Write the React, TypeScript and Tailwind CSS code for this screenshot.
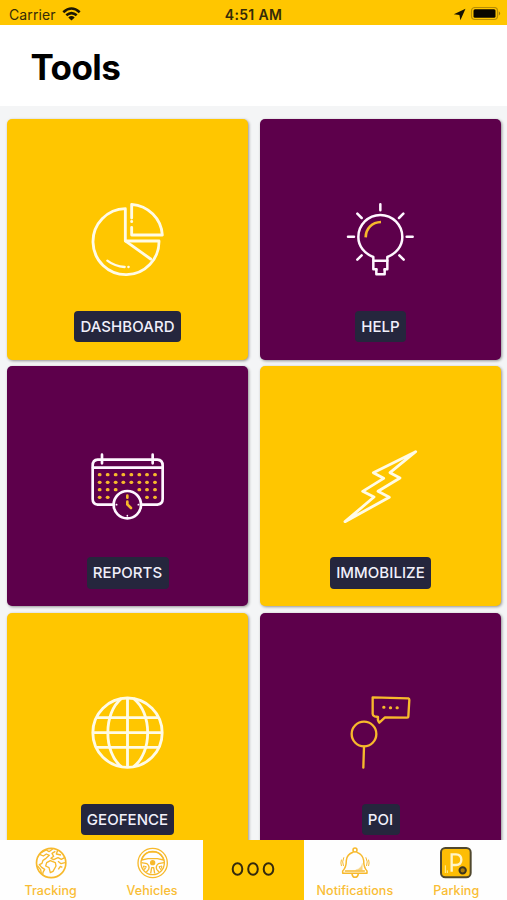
import type { ReactNode } from "react";

const GOLD = "#f7b92c";

function PieIcon() {
  return (
    <svg className="h-20 w-19" viewBox="90 30 228 240" fill="none" stroke="#fffbe6" strokeWidth="8.500" strokeLinejoin="round" strokeLinecap="round">
      <path d="M196 56A99 99 0 1 0 297 153H196Z" />
      <path d="M198 154L272 207" />
      <path d="M215 84V43C265 47 304 86 307 135H215V112" />
      <path d="M215 94V95" />
      <path d="M142 212Q164 229 194 231M205 231H206" strokeWidth="7" />
    </svg>
  );
}

function BulbIcon() {
  return (
    <svg className="h-20 w-19" viewBox="99 30 228 240" fill="none" stroke="#fff7ff" strokeWidth="7.500" strokeLinejoin="round" strokeLinecap="round">
      <path d="M190 201C164 191 145 169 145 141A66 66 0 0 1 277 141C277 169 258 191 232 201V238H224V253H199V238H190Z" />
      <path d="M191 212H232M199 238V239M224 238V239" />
      <path d="M211 43V61M142 71L155 84M280 71L267 84M114 140H132M290 140H308M142 209L155 196M281 209L268 196" />
      <path d="M167 142C168 115 186 97 213 96" stroke={GOLD} strokeWidth="8" strokeLinecap="butt" />
    </svg>
  );
}

const dotRows = [
  { y: 118, xs: [119, 143, 167, 190, 214, 238, 261, 285] },
  { y: 141, xs: [119, 143, 167, 190, 214, 238, 261, 285] },
  { y: 163, xs: [119, 143, 167, 238, 261, 285] },
  { y: 186, xs: [119, 143, 261, 285] },
];

function CalendarIcon() {
  return (
    <svg className="h-20 w-19" viewBox="90 35 228 240" fill="none" stroke="#fff7ff" strokeWidth="8" strokeLinecap="round">
      <path d="M160 208H113Q98 206 98 191V91Q98 74 113 73H292Q308 74 308 91V191Q308 206 292 208H245" />
      <path d="M99 97H307M126 58V84M278 58V84" />
      <circle cx="202" cy="208" r="41" />
      {dotRows.map((row) =>
        row.xs.map((x) => (
          <path key={`${x}-${row.y}`} d={`M${x - 1} ${row.y}H${x + 1}`} stroke={GOLD} strokeWidth="9.500" />
        )),
      )}
      <path d="M202 181V187M202 199V207L213 218" stroke={GOLD} strokeWidth="8" />
      <path d="M169 208H170M235 208H236M202 241V242" strokeWidth="5" />
    </svg>
  );
}

function BoltIcon() {
  return (
    <svg className="h-20 w-19" viewBox="99 35 228 240" fill="none" stroke="#fffbe6" strokeWidth="8.500" strokeLinejoin="round">
      <path d="M317 49L190 112L221 129L158 168L192 185L105 259L238 186L204 168L270 128L240 112Z" />
    </svg>
  );
}

function GlobeIcon() {
  return (
    <svg className="h-20 w-19" viewBox="90 25 228 240" fill="none" stroke="#fffbe6" strokeWidth="8.500">
      <circle cx="202.500" cy="144" r="104" />
      <path d="M202.500 40V248M99 144H306M110 99H295M110 188H295" />
      <path d="M184 42C130 85 130 203 184 246M221 42C277 85 277 203 221 246" />
    </svg>
  );
}

function PoiIcon() {
  return (
    <svg className="h-20 w-19" viewBox="99 25 228 240" fill="none" stroke={GOLD} strokeWidth="7" strokeLinejoin="round" strokeLinecap="round">
      <circle cx="162" cy="148" r="37" />
      <path d="M162 186L160 249" />
      <path d="M188 38L295 41Q298 42 298 46L295 95Q295 99 291 99L225 98L208 114Q202 108 204 97L194 95Q188 93 188 88Z" />
      <path d="M221 68H222M241 69H242M261 69H262" strokeWidth="9" />
    </svg>
  );
}

function EarthIcon() {
  return (
    <svg className="size-9" viewBox="99 46 108 108" fill="none" stroke={GOLD} strokeWidth="4" strokeLinejoin="round">
      <circle cx="153.500" cy="100" r="44" strokeWidth="5" />
      <path d="M119 74L130 79L139 73L148 77L138 86L129 92L126 101L118 105L125 113L134 119L129 128L128 136M122 70L139 61L147 66L158 58M112 108L122 120L124 132" />
      <path d="M166 65L156 71L161 80L153 86L161 90L174 84L184 89L195 83M173 62L169 73L183 76M140 99L151 93L166 99L168 109L159 125L151 129L147 114L137 109ZM174 95L183 102L195 99M175 119L181 110L187 113" />
    </svg>
  );
}

function WheelIcon() {
  return (
    <svg className="size-9" viewBox="403 46 108 108" fill="none" stroke={GOLD} strokeWidth="4" strokeLinejoin="round">
      <circle cx="459" cy="100" r="44" />
      <circle cx="459" cy="100" r="35" />
      <path d="M426 91Q432 72 449 67H469Q486 72 492 91L473 87H445ZM425 99L442 102Q451 109 447 119L440 127M493 99L476 102Q467 109 471 119L478 127M453 131L456 114H462L465 131" />
      <circle cx="459" cy="99" r="6" fill={GOLD} />
      <path d="M431 109L440 111L435 120ZM487 109L478 111L483 120Z" strokeWidth="3" />
    </svg>
  );
}

function DotsIcon() {
  return (
    <svg className="h-4 w-12" viewBox="0 0 48 16" fill="none" stroke="#342a0d" strokeWidth="2">
      <ellipse cx="8.500" cy="7" rx="4.800" ry="5.800" />
      <ellipse cx="24" cy="7" rx="4.800" ry="5.800" />
      <ellipse cx="39.500" cy="7" rx="4.800" ry="5.800" />
    </svg>
  );
}

function BellIcon() {
  return (
    <svg className="size-9" viewBox="251 46 108 108" fill="none" stroke={GOLD} strokeWidth="4.500" strokeLinejoin="round" strokeLinecap="round">
      <path d="M299 68Q281 74 279 92Q279 114 268 124V131H341V124Q331 114 331 92Q328 74 311 68" />
      <circle cx="305" cy="61" r="6" />
      <path d="M296 133Q298 143 305 143Q313 143 315 133M276 124H333" />
      <path d="M271 84Q265 97 270 108M264 91Q261 100 264 108M338 84Q345 97 340 108M346 91Q349 100 346 108" strokeWidth="3" />
      <path d="M327 102V121H307Q323 117 327 102Z" fill={GOLD} strokeWidth="1" opacity=".6" />
    </svg>
  );
}

function ParkingIcon() {
  return (
    <svg className="size-9" viewBox="555 46 108 108" fill="none">
      <rect x="564" y="55" width="89" height="88" rx="13" fill="#fdbd05" stroke="#50482f" strokeWidth="6" />
      <path d="M596 126V74H609Q625 75 625 90Q625 105 609 106H597" stroke="#fff5c9" strokeWidth="7" />
      <path d="M577 107V130M583 122V130" stroke="#fff0a0" strokeWidth="3" />
      <circle cx="629" cy="122" r="9.500" fill="#a87b0b" stroke="#3b351f" strokeWidth="6" />
    </svg>
  );
}

function StatusBar() {
  return (
    <div className="grid h-[25px] shrink-0 grid-cols-3 items-center bg-[#ffc600] pt-[3px] text-[#352b08]">
      <div className="flex items-center gap-[6px] pl-[9px] text-[14px] tracking-[0.1px]">
        <span>Carrier</span>
        <svg className="h-[14px] w-[19px]" viewBox="0 0 19 14" fill="none" stroke="#1c1704" strokeWidth="2.6">
          <path d="M1.300 5.200Q9.500 -2.200 17.700 5.200M4.300 8.300Q9.500 3.800 14.700 8.300" />
          <path d="M9.500 13.500L6.300 10.400Q9.500 7.800 12.700 10.400Z" fill="#1c1704" stroke="none" />
        </svg>
      </div>
      <div className="text-center text-[14px] font-semibold tracking-[0.35px]">4:51 AM</div>
      <div className="flex items-center justify-end gap-[4px] pr-[6px]">
        <svg className="size-[13px]" viewBox="0 0 13 13" fill="#171303">
          <path d="M12.500 .7L7.400 12.200L6.400 6.900L.8 6.200Z" />
        </svg>
        <svg className="h-[14px] w-[31px]" viewBox="0 0 31 14">
          <rect x="1.500" y="0.500" width="26" height="12" rx="3.500" fill="none" stroke="#b68d05" strokeWidth="1.2" />
          <rect x="3.500" y="2.300" width="22" height="8.500" rx="1.500" fill="#090600" />
          <path d="M28.800 4.300Q31.500 6.500 28.800 8.700Z" fill="#9a7808" />
        </svg>
      </div>
    </div>
  );
}

type ToolProps = { label: string; width: string; color: string; icon: ReactNode };

function ToolCard({ label, width, color, icon }: ToolProps) {
  return (
    <button className={`flex h-[240.400px] flex-col items-center rounded-[5px] pt-[80.700px] shadow-[1px_1px_3px_rgba(0,0,0,0.4)] ${color}`}>
      {icon}
      <span className={`mt-[30.800px] flex h-[31.300px] items-center justify-center rounded-[4px] bg-[#25263d] pt-px text-[15px] font-medium tracking-[0.05px] text-[#f1f0fb] ${width}`}>
        {label}
      </span>
    </button>
  );
}

const tools: ToolProps[] = [
  { label: "DASHBOARD", width: "w-[107px]", color: "bg-[#ffc600]", icon: <PieIcon /> },
  { label: "HELP", width: "w-[51px]", color: "bg-[#5d004b]", icon: <BulbIcon /> },
  { label: "REPORTS", width: "w-[82px]", color: "bg-[#5d004b]", icon: <CalendarIcon /> },
  { label: "IMMOBILIZE", width: "w-[101px]", color: "bg-[#ffc600]", icon: <BoltIcon /> },
  { label: "GEOFENCE", width: "w-[93px]", color: "bg-[#ffc600]", icon: <GlobeIcon /> },
  { label: "POI", width: "w-[38px]", color: "bg-[#5d004b]", icon: <PoiIcon /> },
];

function Tab({ label, icon }: { label: string; icon: ReactNode }) {
  return (
    <button className="flex flex-col items-center pt-[5px] text-[12.500px] leading-[18px] font-medium tracking-[0.05px] text-[#f9bd35]">
      {icon}
      <span className="mt-px">{label}</span>
    </button>
  );
}

export default function App() {
  return (
    <div className="flex h-[900px] w-[507px] flex-col overflow-hidden bg-[#f4f5f6] font-[Inter,'Liberation_Sans',sans-serif]">
      <StatusBar />
      <header className="flex h-[81px] shrink-0 items-center bg-white pl-[30.500px] pt-[3px]">
        <h1 className="text-[35px] font-bold tracking-[-0.6px] text-black">Tools</h1>
      </header>
      <main className="grid min-h-0 flex-1 grid-cols-[241px_241px] content-start gap-x-[12px] gap-y-[6.300px] overflow-hidden pl-[7px] pt-[13.300px]">
        {tools.map((tool) => (
          <ToolCard key={tool.label} {...tool} />
        ))}
      </main>
      <nav className="grid h-[60px] shrink-0 grid-cols-5 bg-[#fefefe]">
        <Tab label="Tracking" icon={<EarthIcon />} />
        <Tab label="Vehicles" icon={<WheelIcon />} />
        <button aria-label="Tools" className="flex items-center justify-center bg-[#ffc600]">
          <DotsIcon />
        </button>
        <Tab label="Notifications" icon={<BellIcon />} />
        <Tab label="Parking" icon={<ParkingIcon />} />
      </nav>
    </div>
  );
}
